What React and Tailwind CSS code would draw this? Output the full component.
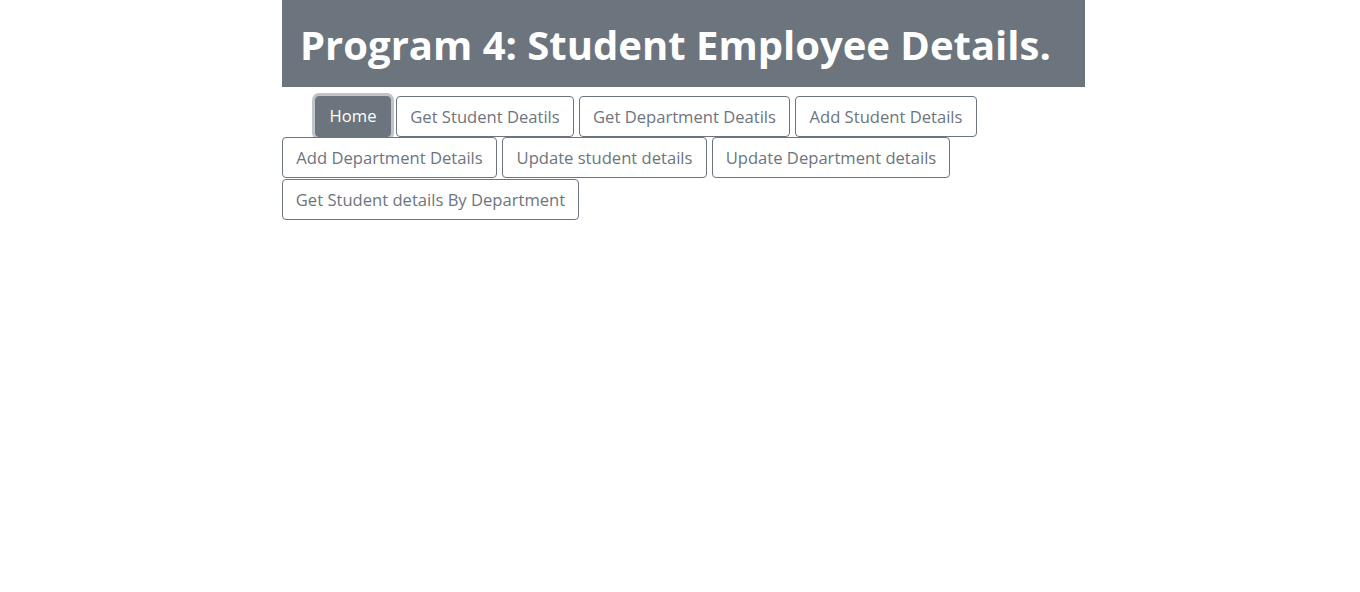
export default function App() {
  const row1 = [
    ["Get Student Deatils", "w-[178px]"],
    ["Get Department Deatils", "w-[211px]"],
    ["Add Student Details", "w-[182px]"],
  ];
  const row2 = [
    ["Add Department Details", "w-[215px]"],
    ["Update student details", "w-[205px]"],
    ["Update Department details", "w-[238px]"],
  ];
  const btn =
    "h-[41px] shrink-0 rounded-[4px] border border-[#6c757d] bg-white text-[#6c757d] text-[16.6px] leading-[27px] flex items-center justify-center whitespace-nowrap";
  return (
    <div className="min-h-[592px] bg-white" style={{ fontFamily: '"Open Sans", "Noto Sans", sans-serif' }}>
      <div className="ml-[282px] w-[803px]">
        <div className="h-[87px] bg-[#6c757d] flex items-center pl-[18px]">
          <h1 className="text-white text-[40px] font-bold leading-none pt-[2px]">
            Program 4: Student Employee Details.
          </h1>
        </div>
        <div className="pt-[9px] flex flex-col">
          <div className="flex gap-[5px] pl-[33px]">
            <div className="w-[76px] h-[41px] shrink-0 rounded-[4px] border border-[#6c757d] bg-[#6c757d] text-white text-[16.6px] flex items-center justify-center shadow-[0_0_0_3px_rgba(130,138,145,0.5)]">
              Home
            </div>
            {row1.map(([t, w]) => (
              <div key={t} className={btn + " " + w}>{t}</div>
            ))}
          </div>
          <div className="flex gap-[5px]">
            {row2.map(([t, w]) => (
              <div key={t} className={btn + " " + w}>{t}</div>
            ))}
          </div>
          <div className="flex mt-[1px]">
            <div className={btn + " w-[297px]"}>Get Student details By Department</div>
          </div>
        </div>
      </div>
    </div>
  );
}
